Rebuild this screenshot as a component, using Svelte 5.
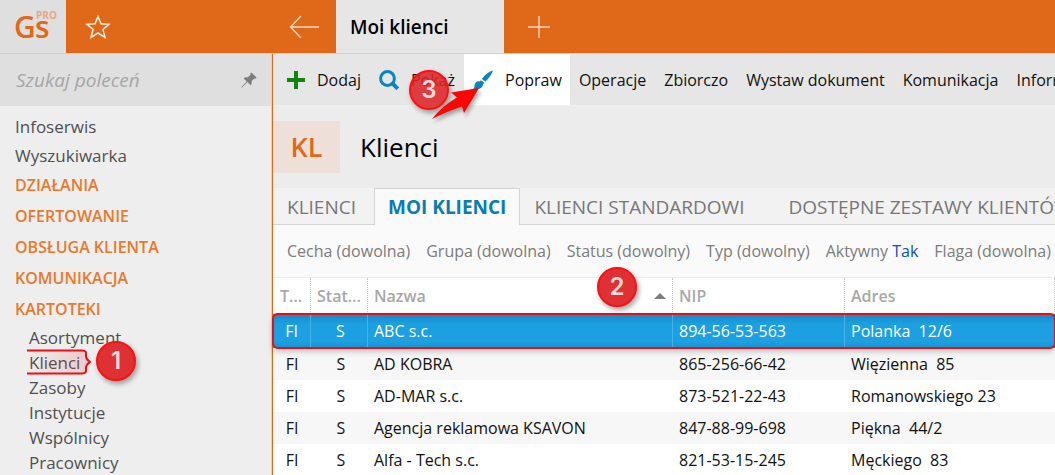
<script>
  const topLinks = ['Infoserwis', 'Wyszukiwarka'];
  const groups = ['DZIAŁANIA', 'OFERTOWANIE', 'OBSŁUGA KLIENTA', 'KOMUNIKACJA', 'KARTOTEKI'];
  const files = ['Asortyment', 'Klienci', 'Zasoby', 'Instytucje', 'Wspólnicy', 'Pracownicy'];
  const menus = ['Operacje', 'Zbiorczo', 'Wystaw dokument', 'Komunikacja', 'Informacje'];
  const filters = [
    ['Cecha', '(dowolna)'],
    ['Grupa', '(dowolna)'],
    ['Status', '(dowolny)'],
    ['Typ', '(dowolny)'],
    ['Aktywny', 'Tak'],
    ['Flaga', '(dowolna)']
  ];
  const rows = [
    ['FI', 'S', 'ABC s.c.', '894-56-53-563', 'Polanka  12/6'],
    ['FI', 'S', 'AD KOBRA', '865-256-66-42', 'Więzienna  85'],
    ['FI', 'S', 'AD-MAR s.c.', '873-521-22-43', 'Romanowskiego 23'],
    ['FI', 'S', 'Agencja reklamowa KSAVON', '847-88-99-698', 'Piękna  44/2'],
    ['FI', 'S', 'Alfa - Tech s.c.', '821-53-15-245', 'Męckiego  83']
  ];
  let selected = $state(0);
  let query = $state('');
</script>

<div class="app">
  <header class="top">
    <div class="logo">
      <svg width="52" height="52" viewBox="0 0 52 52" role="img" aria-label="Gs PRO">
        <text class="gs" x="0" y="38">G</text>
        <text class="gs" x="21" y="38">s</text>
        <text class="pro" x="22" y="19">PRO</text>
      </svg>
    </div>
    <div class="fav">
      <button aria-label="Ulubione">
        <svg width="26" height="26" viewBox="0 0 26 26" fill="none" stroke="#fdeee2" stroke-width="1.5">
          <path d="M13 2.500L16 9.800L24 10.300L17.900 15.400L20 23.300L13 19L6 23.300L8.100 15.400L2 10.300L10 9.800Z" />
        </svg>
      </button>
    </div>
    <button class="back" aria-label="Wstecz">
      <svg width="30" height="24" viewBox="0 0 30 24" fill="none" stroke="#fbd9c0" stroke-width="1.400">
        <path d="M12 1L1.500 12L12 23M1.500 12H30" />
      </svg>
    </button>
    <button class="window-tab">Moi klienci</button>
    <button class="new-tab" aria-label="Nowa karta">
      <svg width="22" height="22" viewBox="0 0 22 22" stroke="#fbd9c0" stroke-width="1.400"><path d="M11 0V22M0 11H22" /></svg>
    </button>
  </header>

  <div class="body">
    <aside>
      <div class="search">
        <input type="text" aria-label="Szukaj poleceń" placeholder="Szukaj poleceń" bind:value={query} />
        <button aria-label="Przypnij">
          <svg width="16" height="16" viewBox="0 0 16 16" fill="#7d7d7d">
            <path d="M10.400 0.500L15.500 5.600L14.300 6.700L13.400 6.400L10.500 9.300C11 11 10.600 12.300 9.600 13.300L6.400 10.100L1 15.400L0.300 15.600L0.500 14.900L5.700 9.400L2.700 6.400C3.800 5.400 5.200 5.100 6.700 5.500L9.600 2.600L9.300 1.600Z" />
          </svg>
        </button>
      </div>
      <nav>
        {#each topLinks as link}<a class="link" href="#top">{link}</a>{/each}
        {#each groups as group}<a class="group" href="#group">{group}</a>{/each}
        {#each files as file}
          <a class="file" href="#file">
            {file}
            {#if file === 'Klienci'}
              <svg class="bracket" width="70" height="34" viewBox="0 0 70 34" aria-hidden="true">
                <path d="M2 5.500H57C62 5.500 61 8 61 11C61 14.500 62.500 15 65 17C62.500 19 61 19.500 61 23C61 26 62 28.500 57 28.500H2Z" fill="url(#fade)" />
                <path d="M2 5.500H57C62 5.500 61 8 61 11C61 14.500 62.500 15 65 17C62.500 19 61 19.500 61 23C61 26 62 28.500 57 28.500H2" fill="none" stroke="#f40c10" stroke-width="2" />
                <defs>
                  <linearGradient id="fade"><stop offset="0" stop-color="#e02020" stop-opacity="0" /><stop offset="1" stop-color="#d04040" stop-opacity=".2" /></linearGradient>
                </defs>
              </svg>
              <span class="badge one">1</span>
            {/if}
          </a>
        {/each}
      </nav>
    </aside>

    <main>
      <div class="toolbar">
        <button class="tool">
          <svg width="18" height="18" viewBox="0 0 18 18" fill="#108510"><path d="M7 0H11V7H18V11H11V18H7V11H0V7H7Z" /></svg>
          Dodaj
        </button>
        <button class="tool">
          <svg width="20" height="20" viewBox="0 0 20 20" fill="none" stroke="#0a86bd"><circle cx="8.500" cy="8.500" r="6.900" stroke-width="3" /><path d="M13.200 13.200L18.800 18.800" stroke-width="4" /></svg>
          Pokaż
        </button>
        <button class="tool active">
          <svg width="20" height="20" viewBox="0 0 20 20" fill="#0a86bd">
            <path d="M20 0.300C18.700 4.400 16.300 8 12.500 11.600L8.800 9C11.800 4.800 15.300 1.900 20 0.300Z" />
            <path d="M7.800 10.200L11.300 12.800L9.900 14.600C9.700 18.200 4.800 20.800 0 18.900C2.500 17.500 0.500 15.800 2.300 13.200C3.600 11.200 5.500 11 6.900 11.500Z" />
          </svg>
          Popraw
          <svg class="arrow" width="56" height="42" viewBox="0 0 56 42" aria-hidden="true"><path d="M2 34Q12 21 27 12.500L21 7.500L49 3L34 28L32 21.500Q18 26 2 34Z" fill="#fb0505" /></svg>
          <span class="badge three">3</span>
        </button>
        {#each menus as menu}<button class="menu">{menu}</button>{/each}
      </div>

      <div class="title">
        <span class="code">KL</span>
        <h1>Klienci</h1>
      </div>

      <div class="tabs">
        <button>KLIENCI</button>
        <button class="current">MOI KLIENCI</button>
        <button>KLIENCI STANDARDOWI</button>
        <button class="sets">DOSTĘPNE ZESTAWY KLIENTÓW</button>
      </div>

      <div class="filters">
        {#each filters as [name, value]}
          <button>{name} <span class:set={value === 'Tak'}>{value}</span></button>
        {/each}
      </div>

      <div class="grid">
        <table>
          <colgroup><col class="c1" /><col class="c2" /><col /><col class="c4" /><col class="c5" /></colgroup>
          <thead>
            <tr>
              <th>T...</th>
              <th>Stat...</th>
              <th>
                <div>Nazwa <svg width="12" height="6" viewBox="0 0 12 6" fill="#7d7d7d"><path d="M0 6L6 0L12 6Z" /></svg></div>
                <span class="badge two">2</span>
              </th>
              <th>NIP</th>
              <th>Adres</th>
            </tr>
          </thead>
          <tbody>
            {#each rows as row, i}
              <tr class:selected={selected === i} onclick={() => (selected = i)}>
                {#each row as cell}<td>{cell}</td>{/each}
              </tr>
            {/each}
          </tbody>
        </table>
      </div>
    </main>
  </div>
</div>

<style>
  :global(body) { margin: 0; overflow: hidden; }
  .app {
    display: flex;
    flex-direction: column;
    height: 100vh;
    font-family: 'Segoe UI', 'Open Sans', 'Noto Sans', sans-serif;
    font-size: 16px;
    color: #111;
    background: #ececec;
    overflow: hidden;
  }
  button { font: inherit; color: inherit; background: none; border: 0; padding: 0; white-space: nowrap; flex: none; }
  a { color: inherit; text-decoration: none; }
  svg { display: block; flex: none; }

  .top { display: flex; height: 53px; flex: none; background: #df6918; border-bottom: 1px solid #d9cdc4; }
  .logo { width: 66px; flex: none; background: #dfdfdf; display: flex; padding-left: 14px; box-sizing: border-box; }
  .gs { font: 600 30px 'Open Sans', sans-serif; fill: #e06a1a; }
  .pro { font: 700 10px 'Open Sans', sans-serif; fill: #e2a987; }
  .fav { width: 207px; box-sizing: border-box; padding-left: 19px; display: flex; align-items: center; }
  .back { width: 63px; display: flex; align-items: center; padding-left: 16px; }
  .window-tab { width: 168px; background: #e6e6e6; text-align: left; padding-left: 14px; font-size: 19px; font-weight: 600; color: #000; }
  .new-tab { width: 70px; display: flex; align-items: center; justify-content: center; }

  .body { display: flex; flex: 1; min-height: 0; }
  aside { width: 272px; flex: none; box-sizing: border-box; background: #eee; border-right: 1px solid #d8d2ce; }
  .search { height: 52px; background: #dfdfdf; display: flex; align-items: center; padding: 0 14px 0 16px; }
  .search input { flex: 1; min-width: 0; border: 0; padding: 0; background: none; outline: none; font: italic 19px 'Open Sans', sans-serif; color: #555; }
  .search input::placeholder { color: #a6a6a6; opacity: 1; }
  nav { padding-top: 6px; color: #505050; }
  nav a { display: block; padding-left: 15px; }
  .link { line-height: 29px; font-size: 17px; }
  .group { line-height: 31px; font-weight: 600; color: #e9792c; }
  nav .file { line-height: 25px; font-size: 17px; padding-left: 29px; position: relative; }
  .bracket { position: absolute; left: 25px; top: -5px; }

  main { flex: 1; min-width: 0; display: flex; flex-direction: column; border-left: 1px solid #df6918; }
  .toolbar { display: flex; height: 51px; flex: none; background: #e6e6e6; padding-left: 5px; border-bottom: 1px solid #f0f0f0; }
  .tool { display: flex; align-items: center; gap: 12px; padding: 0 9px; position: relative; }
  .active { background: #fff; padding-right: 8px; }
  .menu { padding: 0 9px; }
  .title { display: flex; align-items: center; gap: 20px; padding: 15px 0; flex: none; }
  .code { width: 67px; line-height: 52px; background: #eee0d8; color: #e06a1a; text-align: center; font-size: 27px; font-weight: 600; }
  h1 { margin: 0; font-size: 26px; font-weight: 400; line-height: 52px; color: #000; }

  .tabs { display: flex; height: 37px; flex: none; background: #f2f2f2; box-shadow: inset 0 -1px #d4d4d4; color: #777; font-size: 19px; }
  .tabs button { padding: 0 14px; line-height: 36px; }
  .tabs button:first-child { padding-right: 18px; }
  .tabs .current { font-weight: 700; color: #0a7cb0; background: #fafafa; border: 1px solid #d4d4d4; border-bottom: 0; padding: 0 13px; }
  .tabs .sets { padding-left: 30px; }
  .filters { display: flex; gap: 16px; height: 52px; flex: none; background: #fafafa; padding-left: 14px; color: #7c7c7c; border-bottom: 1px solid #ececec; }
  .set { color: #0b4cc8; }

  .grid { background: #fff; flex: 1; }
  table { width: 100%; table-layout: fixed; border-collapse: separate; border-spacing: 0; }
  .c1 { width: 38px; }
  .c2 { width: 57px; }
  .c4 { width: 172px; }
  .c5 { width: 210px; }
  th { height: 35px; padding: 0 6px; text-align: left; color: #a8a8a8; font-weight: 600; border-right: 1px dotted #c8c8c8; border-bottom: 1px solid #d0d0d0; position: relative; white-space: nowrap; }
  th:first-child { padding: 0 3px 0 7px; }
  th div { display: flex; align-items: center; justify-content: space-between; }
  td { height: 32px; padding: 0 6px; white-space: pre; overflow: hidden; color: #111; }
  td:nth-child(-n + 2) { text-align: center; }
  td:nth-child(2) { padding-left: 9px; }
  tbody tr:nth-child(even) td { background: #f7f7f7; }
  tbody .selected td { height: 34px; color: #fff; background: linear-gradient(#1888c4, #1ca0e2 30%, #1ca0e2 80%, #1a92d0); border-right: 1px solid #48b0e4; box-sizing: border-box; }
  tbody .selected td:last-child { border-right: 0; }
  tbody .selected { position: relative; outline: 2px solid #e50f18; outline-offset: -1px; border-radius: 5px; box-shadow: 0 3px 6px rgb(0 0 0 / 0.25); }

  .badge {
    position: absolute;
    width: 36px;
    height: 36px;
    border: 2px solid #fb1114;
    border-radius: 50%;
    background: #df3034;
    color: #fbdcdc;
    font: 600 24px/36px Inter, sans-serif;
    text-align: center;
    box-shadow: 2px 3px 5px rgb(0 0 0 / 0.35);
    z-index: 2;
  }
  .one { left: 96px; top: -9px; }
  .two { left: 229px; top: -11px; }
  .three { left: -55px; top: 16px; background: rgb(222 34 38 / 0.87); }
  .arrow { position: absolute; left: -34px; top: 31px; z-index: 3; filter: drop-shadow(2px 3px 2px rgb(0 0 0 / 0.35)); }
</style>
